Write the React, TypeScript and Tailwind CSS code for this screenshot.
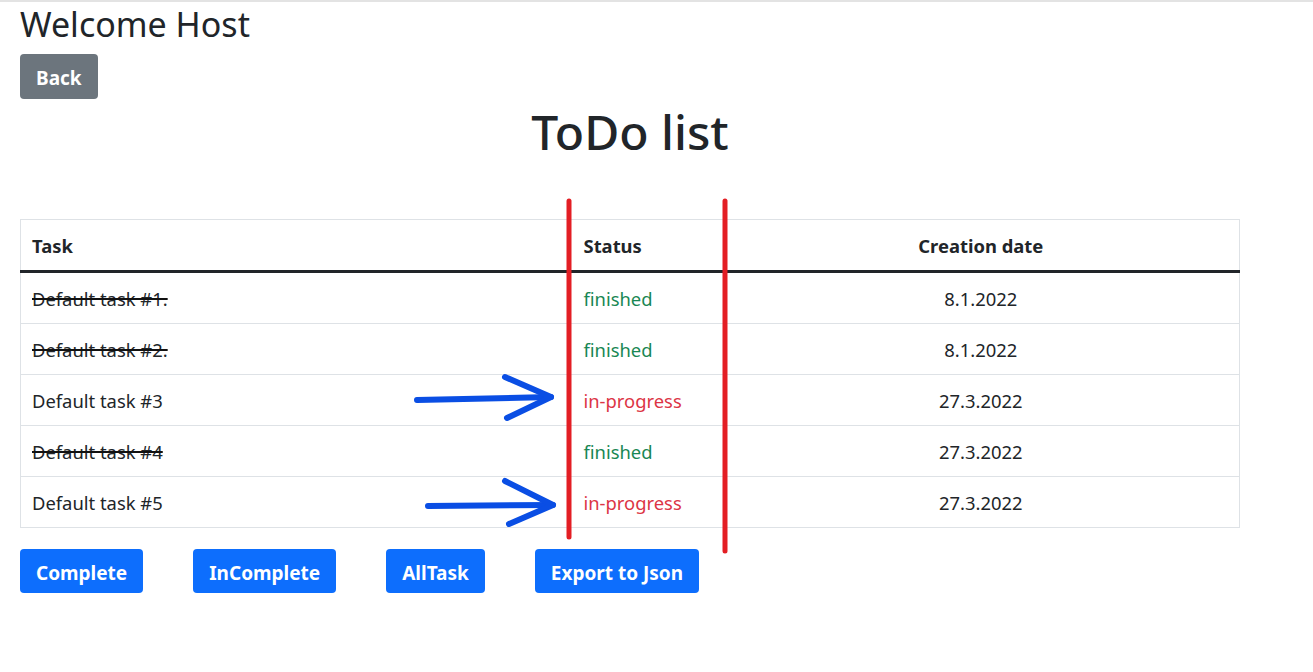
import React from "react";

const rows = [
  { task: "Default task #1.", done: true, date: "8.1.2022" },
  { task: "Default task #2.", done: true, date: "8.1.2022" },
  { task: "Default task #3", done: false, date: "27.3.2022" },
  { task: "Default task #4", done: true, date: "27.3.2022" },
  { task: "Default task #5", done: false, date: "27.3.2022" },
];

export default function App() {
  return (
    <div
      className="relative min-h-[672px] w-[1313px] border-t-2 border-[#e3e3e3] bg-white text-[#212529]"
      style={{ fontFamily: '"Noto Sans", "Open Sans", sans-serif' }}
    >
      <div className="ml-5 w-[1220px]">
        <h2 className="mt-[2px] text-[34px] leading-[40px] font-normal">Welcome Host</h2>
        <button className="mt-[10px] h-[45px] rounded-[4px] bg-[#6c757d] px-[16px] pt-[4px] text-[19px] font-bold text-white">
          Back
        </button>
        <h1 className="mt-[3px] text-center text-[48px] leading-[60px] font-medium">ToDo list</h1>

        <table className="mt-[57px] w-[1220px] border border-[#dee2e6] text-[18.4px]">
          <thead>
            <tr className="border-b-[3px] border-[#212529]">
              <th className="w-[552px] pt-[13px] pb-[11px] pr-3 pl-[11px] text-left leading-[26px] font-bold">Task</th>
              <th className="w-[150px] pt-[13px] pb-[11px] pr-3 pl-[11px] text-left leading-[26px] font-bold">Status</th>
              <th className="px-3 pt-[13px] pb-[11px] text-center leading-[26px] font-bold">Creation date</th>
            </tr>
          </thead>
          <tbody>
            {rows.map((r, i) => (
              <tr key={i} className="border-b border-[#dee2e6]">
                <td className="pt-[13px] pb-[11px] pr-3 pl-[11px] leading-[26px]">
                  <span className={r.done ? "line-through decoration-[#111] decoration-2" : ""}>{r.task}</span>
                </td>
                <td
                  className={
                    "pt-[13px] pb-[11px] pr-3 pl-[11px] leading-[26px] " +
                    (r.done ? "text-[#198754]" : "text-[#dc3545]")
                  }
                >
                  {r.done ? "finished" : "in-progress"}
                </td>
                <td className="px-3 pt-[13px] pb-[11px] text-center leading-[26px]">{r.date}</td>
              </tr>
            ))}
          </tbody>
        </table>

        <div className="mt-[21px] flex gap-[50px]">
          {["Complete", "InComplete", "AllTask", "Export to Json"].map((t) => (
            <button
              key={t}
              className="h-[44px] rounded-[4px] bg-[#0d6efd] px-[16px] pt-[5px] text-[19px] font-bold text-white"
            >
              {t}
            </button>
          ))}
        </div>
      </div>

      <svg className="pointer-events-none absolute left-0 top-0" width="1313" height="672">
        <g stroke="#e31e24" strokeWidth="5" strokeLinecap="round">
          <line x1="569" y1="199" x2="569" y2="535" />
          <line x1="725" y1="199" x2="725" y2="549" />
        </g>
        <g stroke="#0a4ee4" strokeWidth="6" strokeLinecap="round" strokeLinejoin="round" fill="none">
          <path d="M417 398 L551 395" />
          <path d="M505 375 L551 395 L507 416" />
          <path d="M428 504 L553 503" />
          <path d="M505 479 L553 503 L509 522" />
        </g>
      </svg>
    </div>
  );
}
